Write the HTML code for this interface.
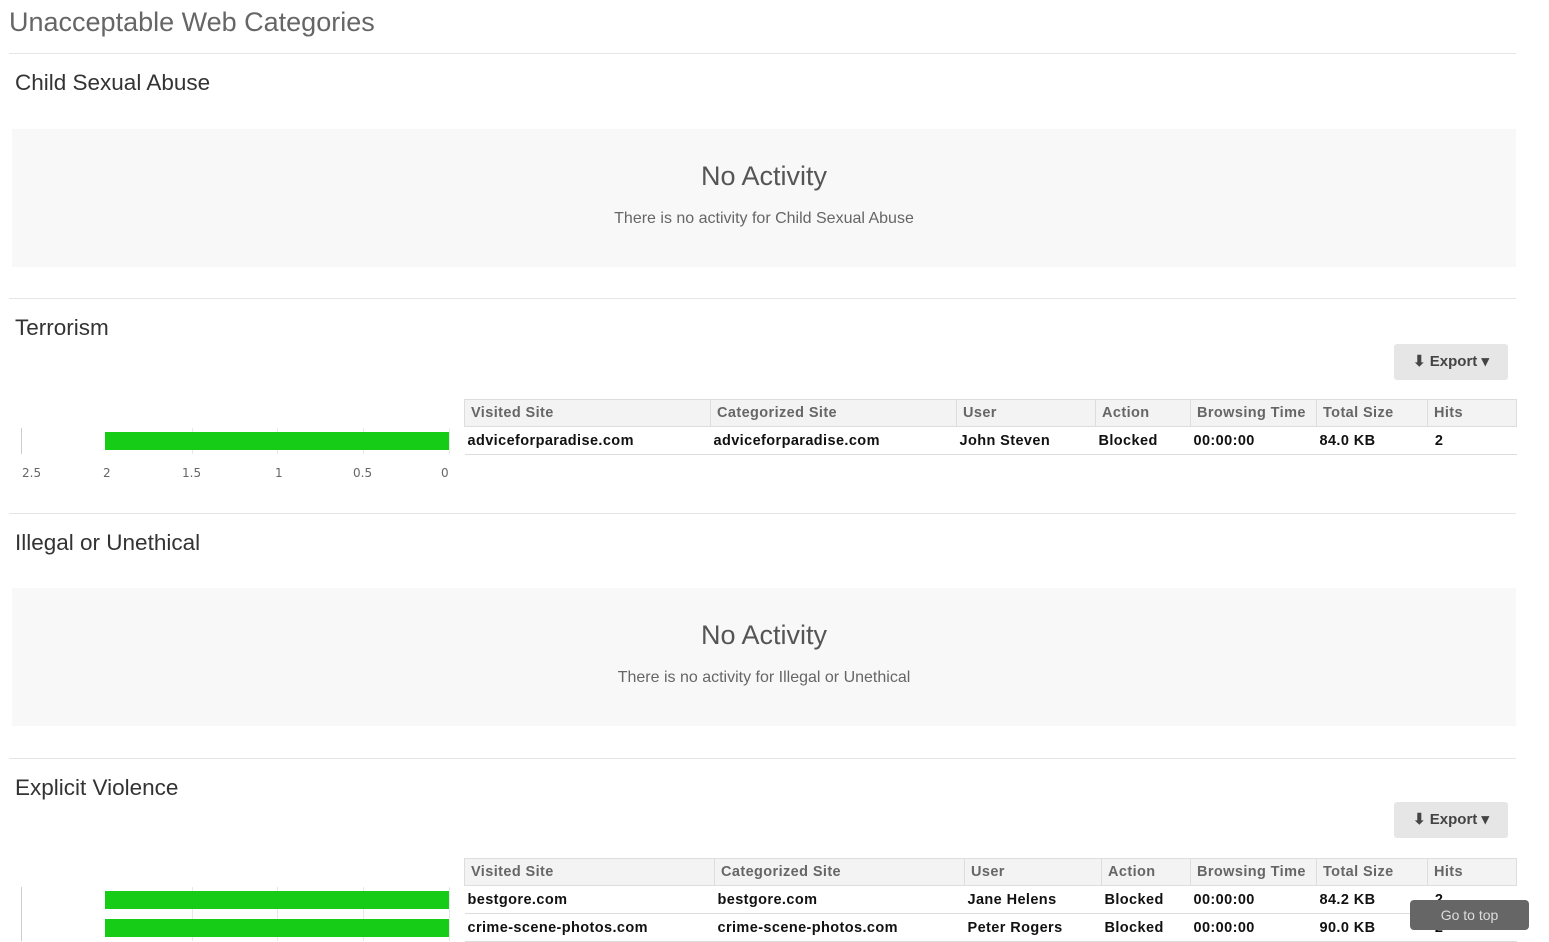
<!DOCTYPE html><html><head><style>
body{margin:0;width:1549px;height:941px;overflow:hidden;background:#fff;font-family:"Liberation Sans",sans-serif;position:relative}
.a{position:absolute}
.h1{left:9px;top:7px;font-size:27px;color:#666}
.hr{left:9px;width:1507px;height:1px;background:#e5e5e5}
.h2{left:15px;font-size:22.5px;color:#333}
.box{left:12px;width:1504px;height:138px;background:#f8f8f8;text-align:center}
.box .t{font-size:27px;color:#555;margin-top:32px}
.box .s{font-size:16px;color:#666;margin-top:18px}
.btn{left:1394px;width:114px;height:36px;background:#e6e6e6;border-radius:3px;font-size:15px;font-weight:bold;color:#444;line-height:36px;text-align:center}
table{position:absolute;border-collapse:collapse;font-size:14.5px;font-weight:bold;letter-spacing:.4px}
th{background:#f3f3f3;color:#666;text-align:left;height:26px;padding:0 6px;border:1px solid #ddd}
td{color:#111;height:27px;padding:0 3px;border-bottom:1px solid #ddd}
.ax{width:1px;background:#ccc}
.g{width:1px;background:#e8e8e8}
.bar{background:#16cc16;height:18px}
.lb{font-family:"DejaVu Sans",sans-serif;font-size:12px;color:#666;top:466px}
</style></head><body>
<div class="a h1">Unacceptable Web Categories</div>
<div class="a hr" style="top:53px"></div>
<div class="a h2" style="top:70px">Child Sexual Abuse</div>
<div class="a box" style="top:129px"><div class="t">No Activity</div><div class="s">There is no activity for Child Sexual Abuse</div></div>
<div class="a hr" style="top:298px"></div>
<div class="a h2" style="top:315px">Terrorism</div>
<div class="a btn" style="top:344px">⬇ Export ▾</div>
<div class="a ax" style="left:21px;top:428px;height:26px"></div>
<div class="a g" style="left:192px;top:428px;height:26px"></div><div class="a g" style="left:277px;top:428px;height:26px"></div><div class="a g" style="left:363px;top:428px;height:26px"></div><div class="a g" style="left:449px;top:428px;height:26px"></div>
<div class="a bar" style="left:105px;top:432px;width:344px"></div>
<div class="a lb" style="left:22px">2.5</div><div class="a lb" style="left:103px">2</div><div class="a lb" style="left:182px">1.5</div><div class="a lb" style="left:275px">1</div><div class="a lb" style="left:353px">0.5</div><div class="a lb" style="left:441px">0</div>
<table style="left:464px;top:399px;width:1053px">
<tr><th style="width:233px">Visited Site</th><th style="width:233px">Categorized Site</th><th style="width:126px">User</th><th style="width:82px">Action</th><th style="width:113px">Browsing Time</th><th style="width:98px">Total Size</th><th>Hits</th></tr>
<tr><td>adviceforparadise.com</td><td>adviceforparadise.com</td><td>John Steven</td><td>Blocked</td><td>00:00:00</td><td>84.0 KB</td><td>&nbsp;2</td></tr></table>
<div class="a hr" style="top:513px"></div>
<div class="a h2" style="top:530px">Illegal or Unethical</div>
<div class="a box" style="top:588px"><div class="t">No Activity</div><div class="s">There is no activity for Illegal or Unethical</div></div>
<div class="a hr" style="top:758px"></div>
<div class="a h2" style="top:775px">Explicit Violence</div>
<div class="a btn" style="top:802px">⬇ Export ▾</div>
<div class="a ax" style="left:21px;top:887px;height:54px"></div>
<div class="a g" style="left:192px;top:887px;height:54px"></div><div class="a g" style="left:277px;top:887px;height:54px"></div><div class="a g" style="left:363px;top:887px;height:54px"></div><div class="a g" style="left:449px;top:887px;height:54px"></div>
<div class="a bar" style="left:105px;top:891px;width:344px"></div>
<div class="a bar" style="left:105px;top:919px;width:344px"></div>
<table style="left:464px;top:858px;width:1053px">
<tr><th style="width:237px">Visited Site</th><th style="width:237px">Categorized Site</th><th style="width:124px">User</th><th style="width:76px">Action</th><th style="width:113px">Browsing Time</th><th style="width:98px">Total Size</th><th>Hits</th></tr>
<tr><td>bestgore.com</td><td>bestgore.com</td><td>Jane Helens</td><td>Blocked</td><td>00:00:00</td><td>84.2 KB</td><td>&nbsp;2</td></tr>
<tr><td>crime-scene-photos.com</td><td>crime-scene-photos.com</td><td>Peter Rogers</td><td>Blocked</td><td>00:00:00</td><td>90.0 KB</td><td>&nbsp;2</td></tr></table>
<div class="a" style="left:1410px;top:900px;width:119px;height:30px;background:#666;border-radius:4px;color:#ddd;font-size:14px;line-height:30px;text-align:center">Go to top</div>
</body></html>
